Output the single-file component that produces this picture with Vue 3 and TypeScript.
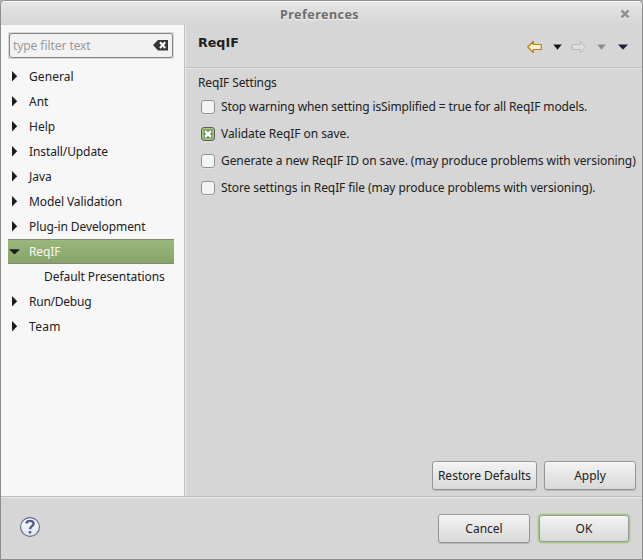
<script setup lang="ts">
import { ref } from 'vue'

interface TreeItem {
  label: string
  tracking: number
  expandable: boolean
  open?: boolean
  child?: boolean
}

interface Option {
  label: string
  tracking: number
  checked: boolean
}

const tree: TreeItem[] = [
  { label: 'General', tracking: 0.08, expandable: true },
  { label: 'Ant', tracking: 0, expandable: true },
  { label: 'Help', tracking: 0, expandable: true },
  { label: 'Install/Update', tracking: -0.1, expandable: true },
  { label: 'Java', tracking: 0, expandable: true },
  { label: 'Model Validation', tracking: -0.1, expandable: true },
  { label: 'Plug-in Development', tracking: -0.1, expandable: true },
  { label: 'ReqIF', tracking: -0.1, expandable: true, open: true },
  { label: 'Default Presentations', tracking: -0.06, expandable: false, child: true },
  { label: 'Run/Debug', tracking: -0.24, expandable: true },
  { label: 'Team', tracking: 0.3, expandable: true },
]

const selected = ref('ReqIF')

const options = ref<Option[]>([
  { label: 'Stop warning when setting isSimplified = true for all ReqIF models.', tracking: -0.12, checked: false },
  { label: 'Validate ReqIF on save.', tracking: -0.05, checked: true },
  { label: 'Generate a new ReqIF ID on save. (may produce problems with versioning)', tracking: -0.07, checked: false },
  { label: 'Store settings in ReqIF file (may produce problems with versioning).', tracking: -0.087, checked: false },
])
</script>

<template>
  <div class="window">
    <header class="titlebar">
      <span class="title">Preferences</span>
      <svg class="close" width="10" height="10" viewBox="0 0 10 10">
        <path d="M1.5 2.5 8.5 9.5M8.5 2.5 1.5 9.5" stroke="#fff" stroke-width="2.4" />
        <path d="M1.5 1.5 8.5 8.5M8.5 1.5 1.5 8.5" stroke="#929292" stroke-width="2.6" />
      </svg>
    </header>

    <div class="body">
      <aside class="sidebar">
        <div class="filter">
          <div class="field">
            <span class="placeholder">type filter text</span>
            <svg width="15" height="11" viewBox="0 0 15 11">
              <path d="M0 5 5 0H15V10.5H5Z" fill="#363636" />
              <path d="M7 2.2 12.2 8M12.2 2.2 7 8" stroke="#fff" stroke-width="2.1" />
            </svg>
          </div>
        </div>
        <ul class="tree">
          <li
            v-for="item in tree"
            :key="item.label"
            :class="{ selected: item.label === selected, child: item.child }"
            @click="selected = item.label"
          >
            <span class="arrow">
              <svg v-if="item.expandable && !item.open" width="12" height="11" viewBox="0 0 12 11">
                <path d="M4 0 9.2 5.2 4 10.4Z" fill="#1c1c1c" />
              </svg>
              <svg v-else-if="item.open" width="12" height="10" viewBox="0 0 12 10">
                <path d="M1 2.2H12L6.5 7.5Z" fill="#1c1c1c" />
              </svg>
            </span>
            <span :style="{ letterSpacing: item.tracking + 'px' }">{{ item.label }}</span>
          </li>
        </ul>
      </aside>

      <main class="page">
        <div class="pagehead">
          <h1>ReqIF</h1>
          <div class="nav">
            <svg width="106" height="14" viewBox="0 0 106 14">
              <path d="M.8 7 6.3 1.5V4.5H14.3V9.5H6.3V12.5Z" fill="#fff6cf" stroke="#bd7d12" stroke-width="1.2" stroke-linejoin="round" />
              <path d="M26.3 4.5H34.7L30.5 9.7Z" fill="#161616" />
              <path d="M58.7 7 53.2 1.5V4.5H45.2V9.5H53.2V12.5Z" fill="#dedede" stroke="#b9b9b9" stroke-linejoin="round" />
              <path d="M70.3 4.5H78.7L74.5 9.7Z" fill="#8c8c8c" />
              <path d="M91 4.5H101L96 9.7Z" fill="#2a1838" />
            </svg>
          </div>
        </div>
        <div class="content">
          <div class="group">ReqIF Settings</div>
          <label v-for="option in options" :key="option.label" class="option" @click="option.checked = !option.checked">
            <span class="box" :class="{ on: option.checked }">
              <svg v-if="option.checked" width="14" height="14" viewBox="0 0 14 14">
                <rect x="2.5" y="2.5" width="9" height="9" fill="#6a8a50" />
                <path d="M4 4 10 10M10 4 4 10" stroke="#fff" stroke-width="2.5" />
              </svg>
            </span>
            <span :style="{ letterSpacing: option.tracking + 'px' }">{{ option.label }}</span>
          </label>
        </div>
        <div class="actions">
          <button class="btn wide">Restore Defaults</button>
          <button class="btn">Apply</button>
        </div>
      </main>
    </div>

    <footer class="footer">
      <svg class="help" width="22" height="22" viewBox="0 0 22 22">
        <defs>
          <linearGradient id="disc" x1="0" y1="0" x2="0" y2="1">
            <stop offset="0" stop-color="#ffffff" />
            <stop offset="1" stop-color="#dfe3ea" />
          </linearGradient>
        </defs>
        <circle cx="11" cy="11" r="9.4" fill="url(#disc)" stroke="#5b6b8b" stroke-width="1.1" />
        <path d="M7.3 7.4C7.7 5.6 9 4.9 11 4.9C13.3 4.9 14.6 6 14.6 7.8C14.6 10.1 11.1 10.3 11 13.3" fill="none" stroke="#50628a" stroke-width="2.4" />
        <rect x="9.6" y="14.9" width="2.8" height="2.5" rx=".9" fill="#50628a" />
      </svg>
      <div class="confirm">
        <button class="btn">Cancel</button>
        <button class="btn default">OK</button>
      </div>
    </footer>
  </div>
</template>

<style>
body {
  margin: 0;
  background: #b0b0b0;
}
</style>

<style scoped>
.window {
  box-sizing: border-box;
  width: 643px;
  height: 560px;
  display: flex;
  flex-direction: column;
  border: 1px solid #8d8d8d;
  border-radius: 5px 5px 0 0;
  overflow: hidden;
  background: #d6d6d6;
  color: #212121;
  font: 12px/16px 'Noto Sans', 'Open Sans', sans-serif;
  white-space: nowrap;
}

.titlebar {
  box-sizing: border-box;
  flex: none;
  display: flex;
  align-items: center;
  height: 24px;
  padding: 2px 12px 0 279px;
  border-top: 1px solid #fff;
  background: linear-gradient(#e5e5e5, #d6d6d6);
}

.title {
  flex: 1;
  color: #6d6d6d;
  font-size: 12.5px;
  font-weight: 700;
  letter-spacing: 0.46px;
  text-shadow: 0 1px #f0f0f0;
}

.close {
  margin-top: -2px;
}

.body {
  flex: 1;
  min-height: 0;
  display: flex;
}

.sidebar {
  box-sizing: border-box;
  width: 185px;
  padding: 7px 10px 0 7px;
  border-right: 1px solid #ececec;
  box-shadow: inset -1px 0 #bdbdbd;
  background: #f7f7f7;
}

.filter {
  height: 27px;
  width: 166px;
  box-sizing: border-box;
  padding: 1px;
  background: #d6d6d6;
}

.field {
  box-sizing: border-box;
  display: flex;
  align-items: center;
  justify-content: space-between;
  height: 25px;
  padding: 0 4px 0 3px;
  border: 1px solid #858585;
  border-radius: 3px;
  background: #f2f2f2;
}

.placeholder {
  color: #9a9a9a;
  letter-spacing: -0.07px;
}

.tree {
  list-style: none;
  margin: 5px 0 0;
  padding: 0;
  width: 166px;
}

.tree li {
  box-sizing: border-box;
  display: flex;
  align-items: center;
  height: 25px;
}

.arrow {
  display: flex;
  width: 21px;
}

.child .arrow {
  width: 36px;
}

.tree .selected {
  border-top: 1px solid #7f8a76;
  border-bottom: 1px solid #7f8a76;
  background: linear-gradient(#9ab87c, #86a467);
  color: #f7f7f7;
}

.page {
  flex: 1;
  display: flex;
  flex-direction: column;
}

.pagehead {
  box-sizing: border-box;
  display: flex;
  justify-content: space-between;
  height: 43px;
  padding: 9px 9px 0 12px;
  border-bottom: 1px solid #bdbdbd;
  box-shadow: 0 1px #e6e6e6;
}

h1 {
  margin: 0;
  font: 700 12.7px/18px 'DejaVu Sans', sans-serif;
}

.nav {
  padding-top: 6px;
}

.content {
  flex: 1;
  padding: 7px 0 0 12px;
}

.group {
  height: 18px;
  letter-spacing: -0.14px;
}

.option {
  display: flex;
  align-items: center;
  gap: 6px;
  height: 27px;
  padding-left: 3px;
}

.box {
  box-sizing: border-box;
  width: 14px;
  height: 14px;
  display: flex;
  border: 1px solid #939393;
  border-radius: 3px;
  background: #f4f4f4;
  box-shadow: 0 1px #e2e2e2;
}

.box.on {
  border-color: #5c5c5c;
  background: #a6cb85;
}

.box svg {
  margin: -1px;
}

.actions,
.confirm {
  display: flex;
  justify-content: flex-end;
}

.actions {
  gap: 7px;
  padding: 0 6px 5px 0;
}

.btn {
  box-sizing: border-box;
  width: 92px;
  height: 29px;
  padding: 0;
  border: 1px solid #969696;
  border-radius: 3px;
  background: linear-gradient(#f3f3f3, #d9d9d9);
  box-shadow: inset 0 1px #fafafa, 0 1px 1px #b4b4b4;
  color: #212121;
  font: inherit;
}

.actions .btn {
  margin-bottom: 1px;
}

.wide {
  width: 105px;
}

.default {
  height: 27px;
  width: 90px;
  margin-top: 1px;
  box-shadow: inset 0 1px #fafafa, 0 0 0 1.5px #a9cb88;
}

.footer {
  box-sizing: border-box;
  flex: none;
  display: flex;
  justify-content: space-between;
  height: 63px;
  padding: 17px 13px 0 18px;
  border-top: 1px solid #bdbdbd;
  box-shadow: inset 0 1px #e6e6e6;
}

.help {
  margin-top: 2px;
}

.confirm {
  gap: 9px;
}
</style>
